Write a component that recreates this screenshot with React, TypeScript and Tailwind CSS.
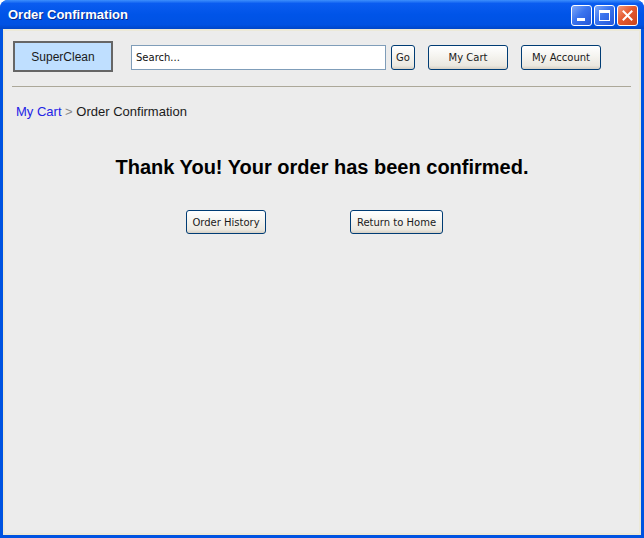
import React from 'react';

const FONT = '"Liberation Sans", Arial, sans-serif';
const UI_FONT = '"DejaVu Sans", Tahoma, sans-serif';

function XpButton({ label, className }: { label: string; className: string }) {
  return (
    <button
      className={`flex items-center justify-center rounded-[3px] border border-[#003c74] bg-[linear-gradient(to_bottom,#ffffff_0%,#f6f5f1_40%,#ebe8e0_85%,#d6d0c5_100%)] text-[10px] text-[#1a1a1a] ${className}`}
      style={{ fontFamily: UI_FONT }}
    >
      {label}
    </button>
  );
}

function TitleButton({ kind }: { kind: 'min' | 'max' | 'close' }) {
  const bg =
    kind === 'close'
      ? 'bg-[linear-gradient(135deg,#f39a7c_0%,#e5592f_45%,#c9441d_100%)]'
      : 'bg-[linear-gradient(135deg,#7fa8f8_0%,#3a74ee_45%,#2456d8_100%)]';
  return (
    <div className={`relative flex h-[21px] w-[21px] items-center justify-center rounded-[3px] border border-white ${bg}`}>
      {kind === 'min' && <div className="absolute bottom-[4px] left-[5px] h-[3px] w-[8px] bg-white" />}
      {kind === 'max' && <div className="h-[11px] w-[11px] border border-t-[3px] border-white" />}
      {kind === 'close' && (
        <svg width="11" height="11" viewBox="0 0 11 11">
          <path d="M1.5 1.5 L9.5 9.5 M9.5 1.5 L1.5 9.5" stroke="white" strokeWidth="2" strokeLinecap="square" />
        </svg>
      )}
    </div>
  );
}

export default function App() {
  return (
    <div
      className="flex h-[538px] w-[644px] flex-col rounded-t-[8px] bg-[#0053e1]"
      style={{ fontFamily: FONT }}
    >
      {/* Title bar */}
      <div className="flex h-[29px] items-center rounded-t-[8px] bg-[linear-gradient(to_bottom,#3d8ffc_0%,#0a5cf0_12%,#0054e8_50%,#0052e3_85%,#0046c8_100%)] pl-[8px] pr-[6px]">
        <span className="text-[13px] font-bold text-white [text-shadow:1px_1px_0_#0a2a8a]">
          Order Confirmation
        </span>
        <div className="ml-auto flex gap-[2px] pt-[1px]">
          <TitleButton kind="min" />
          <TitleButton kind="max" />
          <TitleButton kind="close" />
        </div>
      </div>

      {/* Body */}
      <div className="mx-[3px] mb-[3px] flex flex-1 flex-col border-2 border-t-2 border-[#ece9d8] bg-[#ececec]">
        {/* Header */}
        <div className="flex items-center pl-[8px] pt-[10px]">
          <div className="flex h-[31px] w-[100px] items-center justify-center border-2 border-[#666666] bg-[#bfdfff] pt-[1px] text-[12px] text-[#1a1a1a]">
            SuperClean
          </div>
          <div
            className="ml-[18px] mt-[1px] flex h-[25px] w-[255px] items-center border border-[#7f9db9] bg-white pl-[4px] text-[10px] text-[#111]"
            style={{ fontFamily: UI_FONT }}
          >
            Search...
          </div>
          <XpButton label="Go" className="ml-[5px] mt-[1px] h-[25px] w-[24px]" />
          <XpButton label="My Cart" className="ml-[13px] mt-[1px] h-[25px] w-[80px]" />
          <XpButton label="My Account" className="ml-[13px] mt-[1px] h-[25px] w-[80px]" />
        </div>

        <div className="ml-[7px] mr-[8px] mt-[14px] h-px bg-[#aca899]" />

        {/* Breadcrumb */}
        <div className="ml-[11px] mt-[17px] text-[13px] leading-[16px]">
          <span className="text-[#2323e6]">My Cart</span>
          <span className="text-[#888]"> &gt; </span>
          <span className="text-[#1a1a1a]">Order Confirmation</span>
        </div>

        {/* Confirmation */}
        <h1 className="mt-[35px] text-center text-[20px] font-bold leading-[24px] text-black">
          Thank You! Your order has been confirmed.
        </h1>

        <div className="mt-[31px] flex pl-[181px]">
          <XpButton label="Order History" className="h-[24px] w-[80px]" />
          <XpButton label="Return to Home" className="ml-[84px] h-[24px] w-[93px]" />
        </div>
      </div>
    </div>
  );
}
